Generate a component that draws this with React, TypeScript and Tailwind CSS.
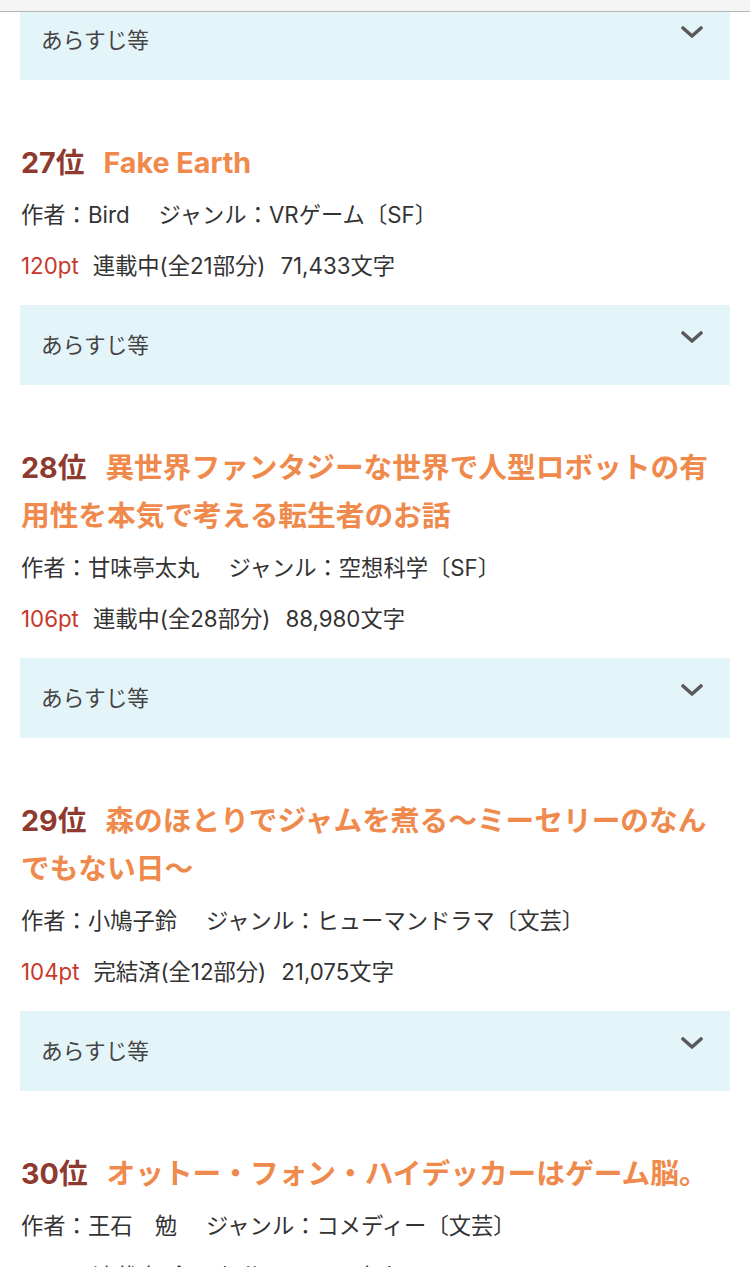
import React from "react";

type Novel = {
  rank: number;
  title: string;
  author: string;
  genre: string;
  pt: number;
  status: string;
  chars: string;
};

const novels: Novel[] = [
  {
    rank: 27,
    title: "Fake Earth",
    author: "Bird",
    genre: "VRゲーム〔SF〕",
    pt: 120,
    status: "連載中(全21部分)",
    chars: "71,433文字",
  },
  {
    rank: 28,
    title: "異世界ファンタジーな世界で人型ロボットの有用性を本気で考える転生者のお話",
    author: "甘味亭太丸",
    genre: "空想科学〔SF〕",
    pt: 106,
    status: "連載中(全28部分)",
    chars: "88,980文字",
  },
  {
    rank: 29,
    title: "森のほとりでジャムを煮る〜ミーセリーのなんでもない日〜",
    author: "小鳩子鈴",
    genre: "ヒューマンドラマ〔文芸〕",
    pt: 104,
    status: "完結済(全12部分)",
    chars: "21,075文字",
  },
  {
    rank: 30,
    title: "オットー・フォン・ハイデッカーはゲーム脳。",
    author: "王石　勉",
    genre: "コメディー〔文芸〕",
    pt: 103,
    status: "連載中(全30部分)",
    chars: "95,214文字",
  },
];

const font = {
  fontFamily: 'Inter, "Noto Sans CJK JP", sans-serif',
};

const Chevron = () => (
  <svg width="22" height="12" viewBox="0 0 22 12" className="mt-[26px] shrink-0">
    <path
      d="M2 2 L11 10 L20 2"
      fill="none"
      stroke="#5a5a5a"
      strokeWidth="3.6"
      strokeLinecap="round"
      strokeLinejoin="round"
    />
  </svg>
);

const Summary = () => (
  <div className="h-[80px] bg-[#e4f5f9] flex justify-between pl-[21px] pr-[27px]">
    <span className="self-center text-[21.7px] text-[#444]">あらすじ等</span>
    <Chevron />
  </div>
);

const NovelItem = ({ novel }: { novel: Novel }) => (
  <div className="pt-[59px]">
    <h2 className="text-[28.7px] leading-[48px] font-bold pl-[1px] mb-[2px]">
      <span className="text-[#8e3a2f] mr-[19px]">{novel.rank}位</span>
      <span className="text-[#ef8a4c]">{novel.title}</span>
    </h2>
    <p className="text-[22.3px] leading-[51px] text-[#333] pl-[1px]">
      <span>作者：{novel.author}</span>
      <span className="ml-[29px]">ジャンル：{novel.genre}</span>
    </p>
    <p className="text-[22.3px] leading-[51px] text-[#333] pl-[1px]">
      <span className="text-[#c8382a] mr-[14px]">{novel.pt}pt</span>
      <span className="mr-[15px]">{novel.status}</span>
      <span>{novel.chars}</span>
    </p>
    <div className="mt-[14px]">
      <Summary />
    </div>
  </div>
);

export default function App() {
  return (
    <div className="relative w-[750px] h-[1267px] overflow-hidden bg-white" style={font}>
      <div className="absolute top-0 left-0 right-0 h-[12px] bg-[#f5f5f5] border-b border-[#b4b4b4] z-10" />
      <div className="px-[20px]">
        <Summary />
        {novels.map((n) => (
          <NovelItem key={n.rank} novel={n} />
        ))}
      </div>
    </div>
  );
}
